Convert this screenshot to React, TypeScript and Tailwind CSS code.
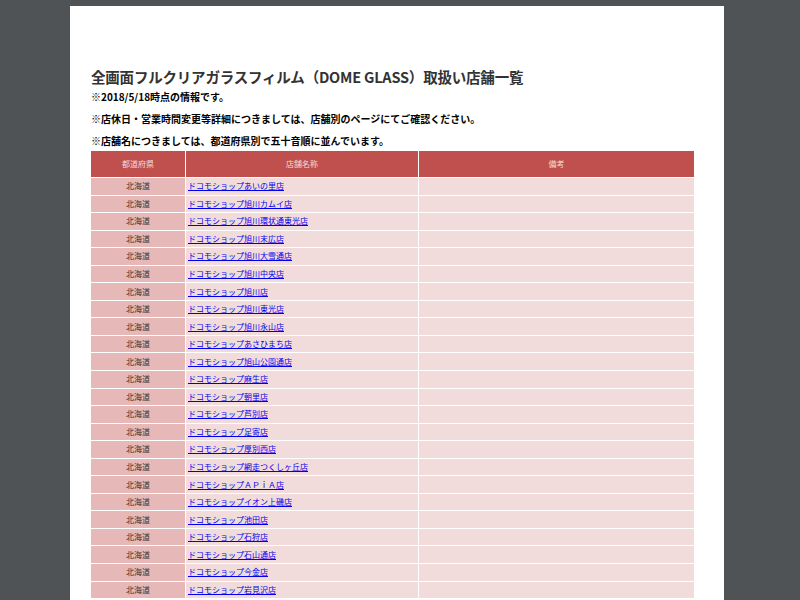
const stores = ["あいの里店","旭川カムイ店","旭川環状通東光店","旭川末広店","旭川大雪通店","旭川中央店","旭川店","旭川東光店","旭川永山店","あさひまち店","旭山公園通店","麻生店","朝里店","芦別店","足寄店","厚別西店","網走つくしヶ丘店","ＡＰｉＡ店","イオン上磯店","池田店","石狩店","石山通店","今金店","岩見沢店"];

export default function App() {
  return (
    <div className="h-[600px] overflow-hidden bg-[#505355] pt-[6px]" style={{ fontFamily: '"Noto Sans CJK JP", "Noto Sans", sans-serif' }}>
      <div className="ml-[70px] w-[654px] bg-white pt-[61px] px-[21px] min-h-[700px]">
        <h1 className="text-[14.5px] font-bold text-[#333] leading-[20px] tracking-[-0.2px]">全画面フルクリアガラスフィルム（DOME GLASS）取扱い店舗一覧</h1>
        <p className="text-[10px] font-bold text-black mt-[3px] leading-[14px]">※2018/5/18時点の情報です。</p>
        <p className="text-[10px] font-bold text-black mt-[8px] leading-[14px]">※店休日・営業時間変更等詳細につきましては、店舗別のページにてご確認ください。</p>
        <p className="text-[10px] font-bold text-black mt-[8px] leading-[14px]">※店舗名につきましては、都道府県別で五十音順に並んでいます。</p>
        <table className="mt-[2px] w-[605px] border-separate border-spacing-[1px] -ml-[1px] text-[8px]">
          <thead>
            <tr className="h-[26px] bg-[#c0504d] text-[#f2dcdb]">
              <th className="w-[94px] font-normal">都道府県</th>
              <th className="w-[232px] font-normal">店舗名称</th>
              <th className="font-normal">備考</th>
            </tr>
          </thead>
          <tbody>
            {stores.map((s) => (
              <tr key={s} className="h-[16.55px]">
                <td className="bg-[#e6b9b8] text-center text-[#333] p-0">北海道</td>
                <td className="bg-[#f2dcdb] px-[2px] py-0"><a className="text-[#0000ee] underline">ドコモショップ{s}</a></td>
                <td className="bg-[#f2dcdb] p-0"></td>
              </tr>
            ))}
          </tbody>
        </table>
      </div>
    </div>
  );
}
